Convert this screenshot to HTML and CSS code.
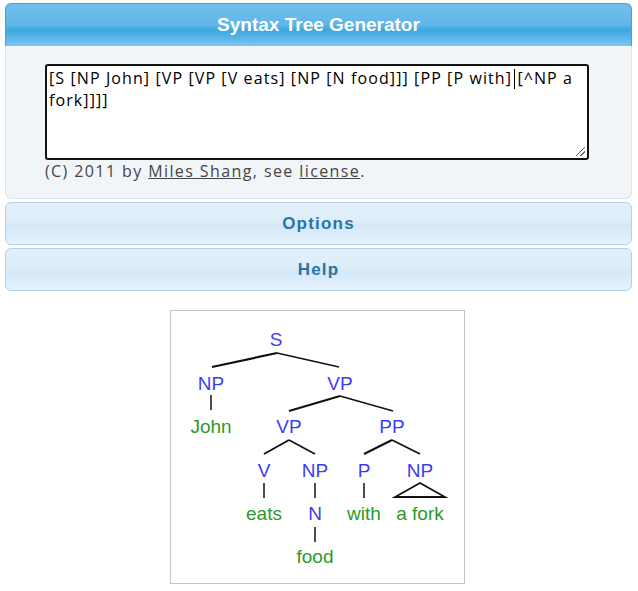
FILE: index.html
```html
<!DOCTYPE html>
<html>
<head>
<meta charset="utf-8">
<title>Syntax Tree Generator</title>
<link rel="stylesheet" href="styles.css">
</head>
<body>
<div class="accordion">
  <h3 class="acc-head acc-active">Syntax Tree Generator</h3>
  <div class="acc-content">
    <div class="textbox" role="textbox">
      <div class="tline"><span>[S [NP John] [VP [VP [V eats] [NP [N food]]] [PP [P with] </span><i class="caret"></i><span>[^NP a</span></div>
      <div class="tline">fork]]]]</div>
    </div>
    <p class="credit">(C) 2011 by <a href="#">Miles Shang</a>, see <a href="#">license</a>.</p>
  </div>
  <h3 class="acc-head">Options</h3>
  <h3 class="acc-head">Help</h3>
</div>
<div class="tree-wrap">
  <div class="tree">
    <svg width="293" height="272" viewBox="0 0 293 272">
      <g stroke="#111" fill="none">
        <path d="M106 42 L41 56" stroke-width="2.2"/>
        <path d="M106 42 L168 56" stroke-width="1.3"/>
        <path d="M40 84 L40 99" stroke-width="1.5"/>
        <path d="M169 85 L118 100" stroke-width="2"/>
        <path d="M169 85 L222 100" stroke-width="1.5"/>
        <path d="M118 129 L93 143" stroke-width="2"/>
        <path d="M118 129 L144 143" stroke-width="1.6"/>
        <path d="M221 129 L193 143" stroke-width="2"/>
        <path d="M221 129 L249 143" stroke-width="1.6"/>
        <path d="M93 172 L93 187" stroke-width="1.5"/>
        <path d="M144 172 L144 187" stroke-width="1.5"/>
        <path d="M193 172 L193 187" stroke-width="1.5"/>
        <path d="M249 172 L224 186 L274 186 Z" stroke-width="1.8"/>
        <path d="M144 216 L144 231" stroke-width="1.5"/>
      </g>
      <g class="cat" text-anchor="middle">
        <text x="105" y="35">S</text>
        <text x="40" y="79">NP</text>
        <text x="169" y="79">VP</text>
        <text x="118" y="122">VP</text>
        <text x="221" y="122">PP</text>
        <text x="93" y="166">V</text>
        <text x="144" y="166">NP</text>
        <text x="193" y="166">P</text>
        <text x="249" y="166">NP</text>
        <text x="144" y="209">N</text>
      </g>
      <g class="word" text-anchor="middle">
        <text x="40" y="122">John</text>
        <text x="93" y="209">eats</text>
        <text x="193" y="209">with</text>
        <text x="249" y="209">a fork</text>
        <text x="144" y="252">food</text>
      </g>
    </svg>
  </div>
</div>
</body>
</html>
```

FILE: styles.css
```css
html, body {
  margin: 0;
  padding: 0;
  background: #ffffff;
}
body {
  font-family: "Open Sans", "Liberation Sans", sans-serif;
}
.accordion {
  margin: 3px 6px 0 5px;
}
.acc-head {
  margin: 3px 0 0 0;
  height: 43px;
  box-sizing: border-box;
  display: flex;
  align-items: center;
  justify-content: center;
  font-family: "Liberation Sans", Arial, sans-serif;
  font-weight: bold;
  font-size: 17px;
  letter-spacing: 1.2px;
  color: #2a73a5;
  border: 1px solid #b2d2ea;
  border-radius: 6px;
  background: linear-gradient(#e3f0fb 0%, #dcedf9 45%, #d4e8f8 55%, #e5f2fc 100%);
}
.acc-active {
  margin-top: 0;
  height: 43px;
  font-size: 19px;
  letter-spacing: 0;
  color: #ffffff;
  border-color: #4a9fd9;
  border-bottom: none;
  border-radius: 6px 6px 0 0;
  background: linear-gradient(#71bfec 0%, #60b6e8 50%, #3ca7e0 62%, #58b4e8 80%, #7dc6ef 100%);
}
.acc-content {
  background: #f2f5f7;
  border: 1px solid #dbe4ec;
  border-top: none;
  border-radius: 0 0 6px 6px;
  padding: 18px 42px 16px 39px;
}
.textbox {
  position: relative;
  box-sizing: border-box;
  height: 96px;
  border: 2px solid #111;
  border-radius: 3px;
  background: #ffffff;
  padding: 1px 2px;
  font-family: "Open Sans", sans-serif;
  font-size: 16px;
  line-height: 22px;
  letter-spacing: 1.1px;
  color: #000;
}
.tline {
  white-space: pre;
}
.textbox::after {
  content: "";
  position: absolute;
  right: 2px;
  bottom: 2px;
  width: 9px;
  height: 9px;
  background: linear-gradient(135deg, transparent 0 45%, #666 45% 55%, transparent 55% 70%, #666 70% 80%, transparent 80%);
}
.caret {
  display: inline-block;
  width: 0;
  height: 20px;
  border-left: 1px solid #000;
  margin: 0 2px 0 -3px;
  vertical-align: -5px;
}
.credit {
  margin: 0;
  font-size: 16px;
  line-height: 22px;
  letter-spacing: 1.4px;
  color: #454545;
}
.credit a {
  color: #454545;
  text-decoration: underline;
}
.tree-wrap {
  display: flex;
  justify-content: center;
  padding: 19px 4px 0 0;
}
.tree {
  border: 1px solid #c3c3c3;
  width: 293px;
  height: 272px;
  background: #fff;
}
.tree svg {
  display: block;
}
.cat text, .word text {
  font-family: "Liberation Sans", Arial, sans-serif;
  font-size: 19px;
}
.cat { fill: #3d3df2; }
.word { fill: #2a9a2a; }
```
